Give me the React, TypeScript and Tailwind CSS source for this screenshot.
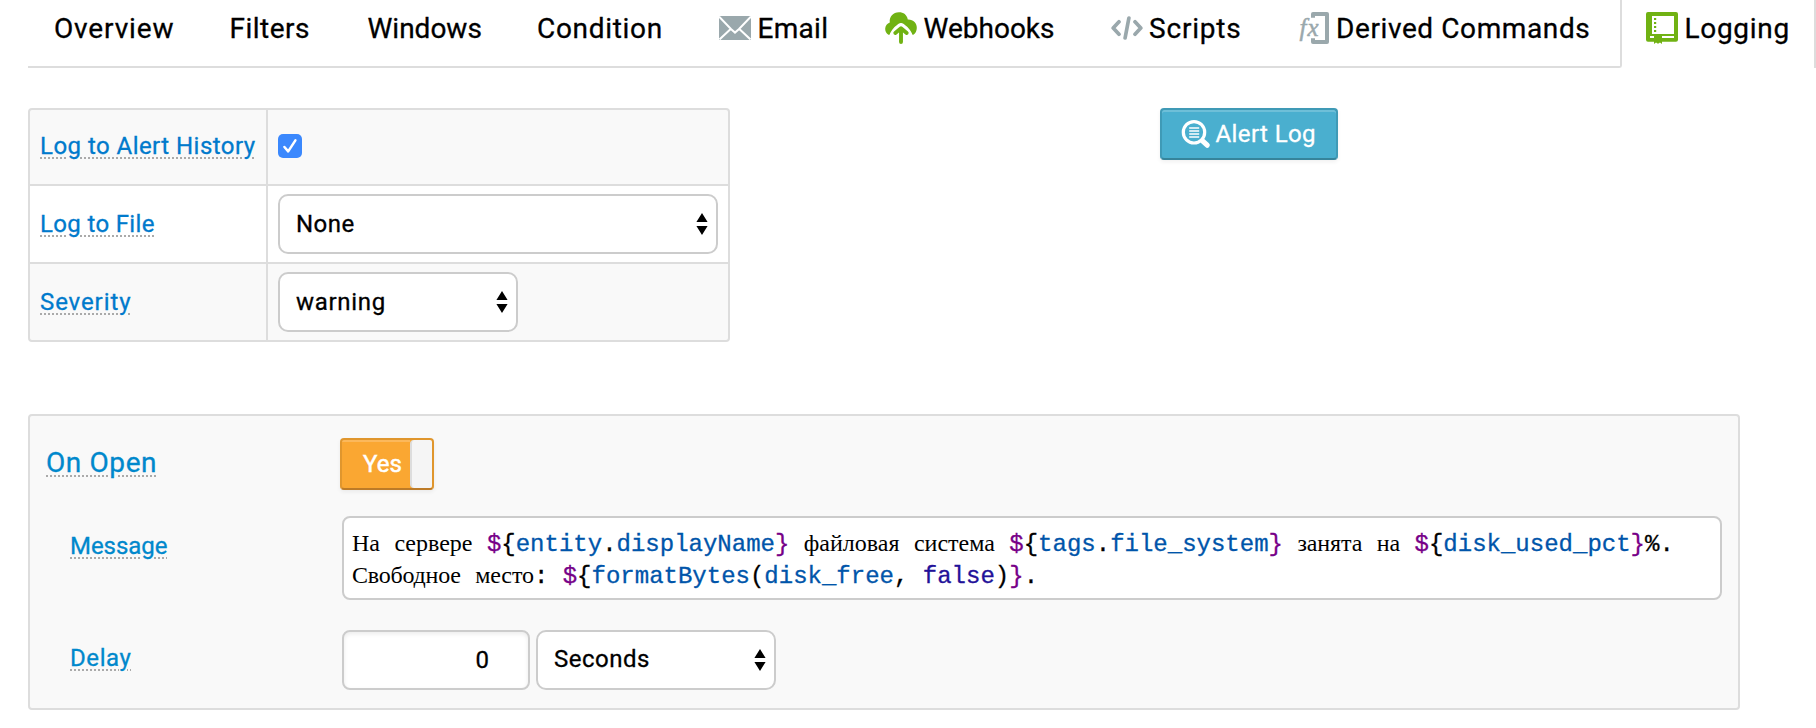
import type { ReactNode } from "react";

function EmailIcon() {
  return (
    <svg width="32" height="24" viewBox="0 0 32 24" className="-mt-0.5 shrink-0">
      <rect width="32" height="24" fill="#9aa8ac" />
      <path d="M0 0.5 L12.2 13.2 L16 16.6 L19.8 13.2 L32 0.5 M0.5 23.5 L12.2 12.5 M31.5 23.5 L19.8 12.5" fill="none" stroke="#fff" strokeWidth="2" />
    </svg>
  );
}

function WebhookIcon() {
  return (
    <svg width="32" height="32" viewBox="0 0 32 32" className="-mt-0.5 shrink-0">
      <path d="M3.4 22.8 C1.2 21.2 0 19 0.2 16.4 C0.4 13.4 2.2 11.4 4.8 10.4 C4 4.6 8.2 0.2 13.9 0.2 C18.6 0.2 22 2.8 22.8 7.4 C28.4 7.2 32 11 31.8 16 C31.7 19 30.6 21.2 28.4 22.8 Z" fill="#70b213" />
      <path d="M4.6 24.6 C6 19.8 9.6 15.4 14 12.3 Q16 10.9 18 12.3 C22.4 15.4 26 19.8 27.4 24.6 Z" fill="#fff" stroke="#fff" strokeWidth="1.4" />
      <path d="M10.3 21 L16 16.2 L21.7 21 M16 16.6 V30" fill="none" stroke="#70b213" strokeWidth="3.9" strokeLinecap="round" strokeLinejoin="round" />
    </svg>
  );
}

function ScriptIcon() {
  return (
    <svg width="32" height="24" viewBox="0 0 32 24" className="-mt-0.5 shrink-0" fill="none" stroke="#9aa8ac" strokeWidth="3.7" strokeLinecap="round" strokeLinejoin="round">
      <path d="M8 5.8 L2.2 12 L8 18.2 M24 5.8 L29.8 12 L24 18.2 M17.9 2 L14.1 22" />
    </svg>
  );
}

function FunctionIcon() {
  return (
    <svg width="32" height="32" viewBox="0 0 32 32" className="-mt-0.5 shrink-0 overflow-visible">
      <path d="M16 5.8 V2 H30 V30 H16 V26.2" fill="none" stroke="#9aa8ac" strokeWidth="4" strokeLinejoin="round" />
      <text x="2.4" y="23.6" fontSize="25" className="font-['Liberation_Serif',serif] tracking-[1.2px] italic [-webkit-text-stroke:0px]" fill="#9aa8ac" stroke="#9aa8ac" strokeWidth="0.5">fx</text>
    </svg>
  );
}

function LogbookIcon() {
  return (
    <svg width="32" height="32" viewBox="0 0 32 32" className="-mt-0.5 shrink-0">
      <path d="M2 0 H30 Q32 0 32 2 V27.8 Q32 29.8 30 29.8 H16 V32 L14 30.4 L12 31.8 L10 30.4 L8 32 V29.8 H2 Q0 29.8 0 27.8 V2 Q0 0 2 0 Z" fill="#70b213" />
      <path d="M6 4 H28 V22 H6 Z M4 24 H8 V26 H4 Z M16 24 H28 V26 H16 Z" fill="#fff" />
      <path d="M8 6 h2.2 v2 h-2.2 Z M8 10 h2.2 v2 h-2.2 Z M8 14 h2.2 v2 h-2.2 Z M8 18 h2.2 v2 h-2.2 Z" fill="#70b213" />
    </svg>
  );
}

function SearchLogIcon() {
  return (
    <svg width="30" height="32" viewBox="0 0 30 32" className="shrink-0" fill="none" stroke="#fff">
      <circle cx="13" cy="14.3" r="10.7" strokeWidth="3.2" />
      <path d="M21.5 22.8 L26.2 27.2" strokeWidth="5.2" strokeLinecap="round" />
      <path d="M8.2 10 H18.2 M8.2 13 H18.2 M8.2 16 H18.2 M8.2 19 H18.2" strokeWidth="1.3" />
    </svg>
  );
}

function Arrows() {
  return (
    <svg width="12" height="22" viewBox="0 0 12 22" className="shrink-0">
      <path d="M6 0 L11.6 9 H0.4 Z M6 22 L11.6 13 H0.4 Z" fill="#000" />
    </svg>
  );
}

function Tab({ className, children }: { className: string; children: ReactNode }) {
  return <div className={`flex h-[58px] shrink-0 items-center whitespace-nowrap text-[28px] ${className}`}>{children}</div>;
}

function Help({ className = "", children }: { className?: string; children: ReactNode }) {
  return (
    <span className={`whitespace-nowrap underline decoration-[#aaa] decoration-dotted decoration-2 underline-offset-[3px] ${className}`}>
      {children}
    </span>
  );
}

function Select({ className, children }: { className: string; children: ReactNode }) {
  return (
    <div className={`flex h-[60px] items-center justify-between rounded-[10px] border-2 border-[#ccc] bg-white pr-2 pl-4 ${className}`}>
      {children}
      <Arrows />
    </div>
  );
}

function Ru({ className = "", children }: { className?: string; children: ReactNode }) {
  return <span className={`font-['Liberation_Serif',serif] leading-none [-webkit-text-stroke:0px] ${className}`}>{children}</span>;
}
const P = ({ children }: { children: ReactNode }) => <span className="text-[#770088]">{children}</span>;
const V = ({ children }: { children: ReactNode }) => <span className="text-[#0055aa]">{children}</span>;

export default function App() {
  return (
    <div className="h-[728px] w-[1816px] overflow-hidden bg-white font-['Roboto',sans-serif] text-2xl text-black [-webkit-text-stroke:0.3px]">
      <nav className="flex h-[68px] pl-7">
        <div className="flex w-[1594px] shrink-0 rounded-br-[3px] border-r-2 border-b-2 border-[#ddd] pl-[26px]">
          <Tab className="w-[175.5px] tracking-[0.85px]">Overview</Tab>
          <Tab className="w-[138px] tracking-[0.5px]">Filters</Tab>
          <Tab className="w-[169.5px]">Windows</Tab>
          <Tab className="w-[182px] tracking-[0.7px]">Condition</Tab>
          <Tab className="w-[165.5px] gap-[6.5px] tracking-[0.3px]"><EmailIcon />Email</Tab>
          <Tab className="w-[226px] gap-[7px]"><WebhookIcon />Webhooks</Tab>
          <Tab className="w-[186.5px] gap-[6.5px] tracking-[0.8px]"><ScriptIcon />Scripts</Tab>
          <Tab className="gap-[7px] tracking-[0.6px]"><FunctionIcon />Derived Commands</Tab>
        </div>
        <Tab className="w-[192px] gap-[7px] pl-[23.5px] tracking-[0.7px]"><LogbookIcon />Logging</Tab>
        <div className="w-0.5 shrink-0 bg-[#ddd]" />
      </nav>

      <div className="flex items-start pt-10 pl-7">
        <div className="grid w-[702px] grid-cols-[236px_1fr] grid-rows-[74px_76px_76px] gap-0.5 overflow-hidden rounded-[4px] border-2 border-[#ddd] bg-[#ddd]">
          <div className="flex items-center bg-[#f9f9f9] pb-0.5 pl-2.5">
            <Help className="tracking-[0.46px] text-[#007acc]">Log to Alert History</Help>
          </div>
          <div className="flex items-center bg-[#f9f9f9] pb-0.5 pl-2.5">
            <div className="flex h-6 w-6 items-center justify-center rounded-[5px] bg-[#3b88fd]">
              <svg width="24" height="24" viewBox="0 0 24 24">
                <path d="M6.4 13 L10.2 17.4 L17.4 6.4" fill="none" stroke="#fff" strokeWidth="2.5" strokeLinecap="round" strokeLinejoin="round" />
              </svg>
            </div>
          </div>
          <div className="flex items-center bg-white pl-2.5">
            <Help className="tracking-[0.35px] text-[#007acc]">Log to File</Help>
          </div>
          <div className="flex items-center bg-white pl-2.5">
            <Select className="w-[440px] tracking-[0.5px]">None</Select>
          </div>
          <div className="flex items-center bg-[#f9f9f9] pl-2.5">
            <Help className="tracking-[0.9px] text-[#007acc]">Severity</Help>
          </div>
          <div className="flex items-center bg-[#f9f9f9] pl-2.5">
            <Select className="w-60 tracking-[0.7px]">warning</Select>
          </div>
        </div>

        <button className="ml-[430px] flex h-[52px] w-[178px] items-center gap-[4.5px] rounded-[4px] border-2 border-[#3f9ab6] border-b-[#36849b] bg-[#4aafcf] pl-[19px] tracking-[0.4px] whitespace-nowrap text-white shadow-[inset_0_2px_0_rgba(255,255,255,0.2),0_2px_4px_rgba(0,0,0,0.06)]">
          <SearchLogIcon />
          Alert Log
        </button>
      </div>

      <section className="mt-[72px] ml-7 h-[296px] w-[1712px] rounded-[4px] border-2 border-[#ddd] bg-[#f9f9f9] pt-[22px] text-[#0088cc]">
        <div className="flex h-[52px] items-center pl-4">
          <div className="w-[294px] pb-0.5 text-[28px] leading-8">
            <Help className="tracking-[0.6px]">On Open</Help>
          </div>
          <div className="flex h-[52px] w-[94px] overflow-hidden rounded-[4px] border-2 border-[#e0962d] border-b-[#bd7b27] bg-[#faa732] text-white shadow-[0_2px_4px_rgba(0,0,0,0.06)]">
            <div className="flex w-[68px] shrink-0 items-center pl-[21px] shadow-[inset_0_2px_0_rgba(255,255,255,0.2)] [-webkit-text-stroke:0.5px]">Yes</div>
            <div className="w-[22px] rounded-l-[4px] border-l-2 border-[#ddd] bg-[#f5f5f5]" />
          </div>
        </div>

        <div className="mt-[26px] flex h-[84px] pl-10">
          <div className="w-[272px] shrink-0 leading-[60px]"><Help className="tracking-[-0.05px]">Message</Help></div>
          <div className="h-[84px] w-[1380px] rounded-[8px] border-2 border-[#ccc] bg-white pt-[11px] pl-2 font-['Liberation_Mono',monospace] leading-8 whitespace-pre text-black">
            <div className="h-8">
              <Ru>На</Ru> <Ru>сервере</Ru> <P>$</P>{"{"}<V>entity</V>.<V>displayName</V><P>{"}"}</P> <Ru>файловая</Ru> <Ru>система</Ru> <P>$</P>{"{"}<V>tags</V>.<V>file_system</V><P>{"}"}</P> <Ru className="tracking-[-0.1px]">занята</Ru> <Ru>на</Ru> <P>$</P>{"{"}<V>disk_used_pct</V><P>{"}"}</P>%.
            </div>
            <div className="h-8">
              <Ru className="tracking-[-0.22px]">Свободное</Ru> <Ru className="tracking-[-0.1px]">место</Ru>: <P>$</P>{"{"}<V>formatBytes</V>(<V>disk_free</V>, <span className="text-[#221199]">false</span>)<P>{"}"}</P>.
            </div>
          </div>
        </div>

        <div className="mt-[30px] flex h-[60px] pl-10">
          <div className="w-[272px] shrink-0 leading-[56px]"><Help className="tracking-[0.6px]">Delay</Help></div>
          <div className="flex h-[60px] w-[188px] items-center justify-end rounded-[8px] border-2 border-[#ccc] bg-white pr-[39px] text-black shadow-[inset_0_2px_4px_rgba(0,0,0,0.08)]">0</div>
          <Select className="ml-1.5 w-60 tracking-[0.5px] text-black"><span className="pb-[3px]">Seconds</span></Select>
        </div>
      </section>
    </div>
  );
}
